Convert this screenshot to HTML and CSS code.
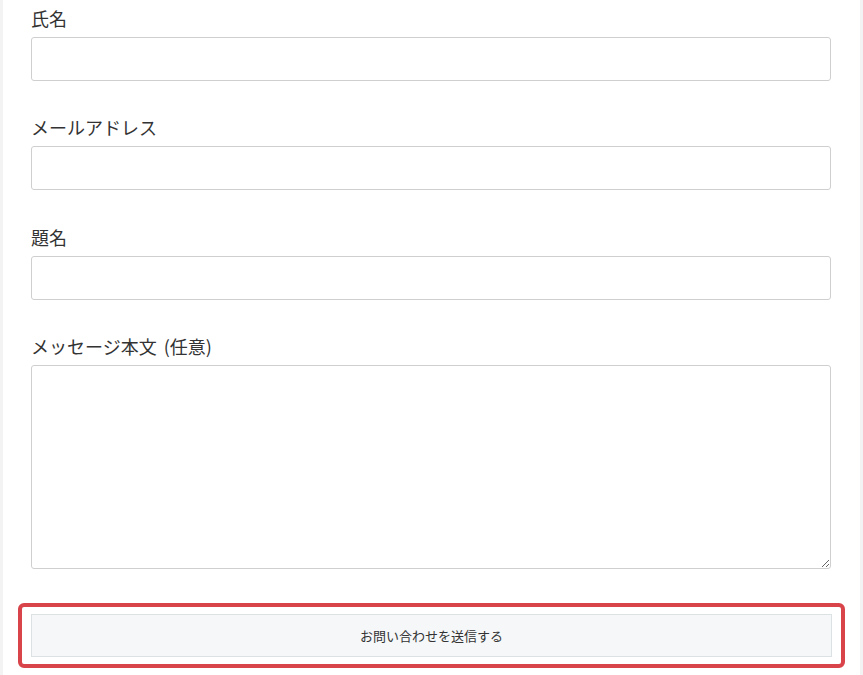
FILE: index.html
```html
<!DOCTYPE html>
<html lang="ja">
<head>
<meta charset="utf-8">
<title>お問い合わせ</title>
<link rel="stylesheet" href="styles.css">
</head>
<body>
<div class="page">
  <form class="contact">
    <div class="field">
      <label class="label">氏名</label>
      <input class="input" type="text">
    </div>
    <div class="field">
      <label class="label">メールアドレス</label>
      <input class="input" type="email">
    </div>
    <div class="field">
      <label class="label">題名</label>
      <input class="input" type="text">
    </div>
    <div class="field">
      <label class="label">メッセージ本文 <span class="opt">(任意)</span></label>
      <textarea class="textarea"></textarea>
    </div>
    <div class="highlight">
      <button class="submit" type="button">お問い合わせを送信する</button>
    </div>
  </form>
</div>
</body>
</html>
```

FILE: styles.css
```css
html, body {
  margin: 0;
  padding: 0;
  background: #f3f3f3;
}
body {
  font-family: "Noto Sans CJK JP", "Noto Sans", sans-serif;
  color: #333;
}
.page {
  margin-left: 3px;
  width: 857px;
  min-height: 675px;
  background: #fff;
  box-sizing: border-box;
  padding: 4.5px 29px 0 28px;
}
.contact {
  display: flex;
  flex-direction: column;
}
.field {
  display: flex;
  flex-direction: column;
  margin-bottom: 33.5px;
}
.label {
  font-size: 18px;
  line-height: 27px;
  margin-bottom: 5px;
  color: #333;
}
.opt {
  margin-left: 3px;
}
.input, .textarea {
  display: block;
  width: 100%;
  box-sizing: border-box;
  border: 1px solid #cfcfcf;
  border-radius: 3px;
  background: #fff;
  margin: 0;
  padding: 6px 10px;
  font-family: inherit;
  font-size: 16px;
}
.input {
  height: 44px;
}
.textarea {
  height: 204px;
  resize: vertical;
}
.highlight {
  margin: 0 -14px 0 -13px;
  border: 4px solid #d9434a;
  border-radius: 6px;
  padding: 7px 9px;
}
.submit {
  display: block;
  width: 100%;
  height: 43px;
  margin: 0;
  box-sizing: border-box;
  background: #f5f7f8;
  border: 1px solid #dce1e3;
  border-radius: 0;
  font-family: inherit;
  font-size: 13px;
  color: #333;
  cursor: pointer;
}
```
